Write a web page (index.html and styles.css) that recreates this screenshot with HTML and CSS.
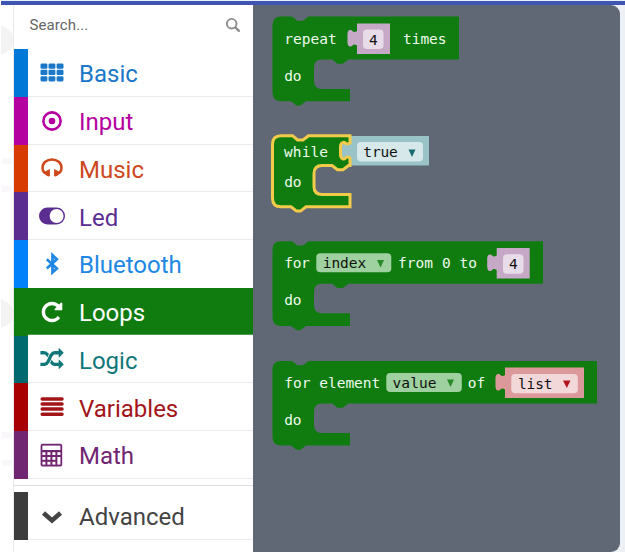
FILE: index.html
```html
<!DOCTYPE html>
<html lang="en">
<head>
<meta charset="utf-8">
<title>Blocks editor</title>
<link rel="stylesheet" href="styles.css">
</head>
<body>
<div class="topbar"></div>
<main class="editor">
  <div class="gutter">
    <svg width="14" height="547" viewBox="0 5 14 547"><path d="M1 25l8 5q4 3 4 7v6q0 5-4 8l-8 4zM1 299l8 5q4 3 4 7v5q0 5-4 8l-8 4z" fill="#f3f3f4"/><path d="M2 161h10M2 189h10M2 435h10M2 463h10" stroke="#f9f7f9" stroke-width="6"/></svg>
  </div>
  <nav class="toolbox">
    <div class="search"><span>Search...</span>
      <svg width="16" height="16" viewBox="0 0 16 16"><circle cx="6.7" cy="6.7" r="4.800" fill="none" stroke="#8d8d8d" stroke-width="1.9"/><path d="M10.4 10.4l3.500 3.500" stroke="#8d8d8d" stroke-width="2.3" stroke-linecap="round"/></svg>
    </div>
    <div class="row basic"><svg class="icon" viewBox="0 0 24 24"><g fill="currentColor"><rect x=".5" y="2.5" width="6.9" height="5.2" rx="1.3"/><rect x="8.5" y="2.5" width="6.9" height="5.2" rx="1.3"/><rect x="16.600" y="2.5" width="6.9" height="5.2" rx="1.3"/><rect x=".5" y="8.800" width="6.9" height="5.2" rx="1.3"/><rect x="8.5" y="8.800" width="6.9" height="5.2" rx="1.3"/><rect x="16.600" y="8.800" width="6.9" height="5.2" rx="1.3"/><rect x=".5" y="15.2" width="6.9" height="5.2" rx="1.3"/><rect x="8.5" y="15.2" width="6.9" height="5.2" rx="1.3"/><rect x="16.600" y="15.2" width="6.9" height="5.2" rx="1.3"/></g></svg><span>Basic</span></div>
    <div class="row input"><svg class="icon" viewBox="0 0 24 24"><circle cx="12" cy="12" r="8.6" fill="none" stroke="currentColor" stroke-width="2.6"/><circle cx="12" cy="12" r="3.3" fill="currentColor"/></svg><span>Input</span></div>
    <div class="row music"><svg class="icon" viewBox="0 0 24 24"><path d="M4.300 16.500Q2.500 14.700 2.500 11.800C2.500 6.700 6.800 3.500 12 3.500s9.500 3.200 9.500 8.300q0 2.900-1.800 4.700" fill="none" stroke="currentColor" stroke-width="2.500"/><path d="M9.900 12.900v7.200q-1.200.7-3.100-.3L2.600 16.700zM14.100 12.900v7.200q1.200.7 3.100-.3l4.200-3.100z" fill="currentColor"/></svg><span>Music</span></div>
    <div class="row led"><svg class="icon wide" viewBox="0 0 28 24"><rect x="1" y="3.500" width="26" height="17" rx="8.500" fill="currentColor"/><circle cx="18.600" cy="12" r="7" fill="#fff"/></svg><span>Led</span></div>
    <div class="row bluetooth"><svg class="icon" viewBox="0 0 24 24"><path d="M6.800 7.200l10 9.200-4.300 4V3.200l4.300 4-10 9.200" fill="none" stroke="currentColor" stroke-width="2.700"/></svg><span>Bluetooth</span></div>
    <div class="row loops"><svg class="icon" viewBox="0 0 1792 1792"><path fill="currentColor" d="M1664 256v448q0 26-19 45t-45 19h-448q-42 0-59-40-17-39 14-69l138-138Q1097 384 896 384q-104 0-198.500 40.500t-163.500 109.500-109.500 163.500-40.500 198.500 40.500 198.500 109.500 163.500 163.500 109.500 198.500 40.500q119 0 225-52t179-147q7-10 23-12 15 0 25 9l137 138q9 8 9.500 20.500t-7.500 22.500q-109 132-264 204.500t-327 72.500q-156 0-298-61t-245-164-164-245-61-298 61-298 164-245 245-164 298-61q147 0 284.500 55.500t244.500 156.500l130-129q29-31 70-14 39 17 39 59z"/></svg><span>Loops</span></div>
    <div class="row logic"><svg class="icon" viewBox="-30 -60 1852 1852"><path fill="currentColor" d="M666 481q-60 92-137 273-22-45-37-72.500t-40.500-63.500-51-56.500-63-35-81.500-14.500h-224q-14 0-23-9t-9-23v-192q0-14 9-23t23-9h224q250 0 410 225zm1126 799q0 14-9 23l-320 320q-9 9-23 9-13 0-22.500-9.500t-9.500-22.500v-192q-32 0-85 .5t-81 1-73-1-71-5-64-10.500-63-18.500-58-28.500-59-40-55-53.500-56-69.500q59-93 136-273 22 45 37 72.500t40.500 63.500 51 56.500 63 35 81.500 14.500h256v-192q0-14 9-23t23-9q12 0 24 10l319 319q9 9 9 23zm0-896q0 14-9 23l-320 320q-9 9-23 9-13 0-22.500-9.500t-9.500-22.500v-192h-256q-48 0-87 15t-69 45-51 61.500-45 77.500q-32 62-78 171-29 66-49.500 111t-54 105-64 100-74 83-90 68.500-106.500 42-128 16.500h-224q-14 0-23-9t-9-23v-192q0-14 9-23t23-9h224q48 0 87-15t69-45 51-61.500 45-77.500q32-62 78-171 29-66 49.500-111t54-105 64-100 74-83 90-68.500 106.500-42 128-16.500h256v-192q0-14 9-23t23-9q12 0 24 10l319 319q9 9 9 23z"/></svg><span>Logic</span></div>
    <div class="row variables"><svg class="icon" viewBox="0 0 24 24"><path d="M2.200 3.900h19.800M2.200 9h19.800M2.200 14.100h19.800M2.200 19.200h19.800" stroke="currentColor" stroke-width="3.500" stroke-linecap="round"/></svg><span>Variables</span></div>
    <div class="row math"><svg class="icon" viewBox="0 0 24 24"><rect x=".6" y=".8" width="21.600" height="22.600" rx="2" fill="currentColor"/><g fill="#fff"><rect x="2.400" y="2.600" width="18" height="4.400"/><rect x="2.400" y="9.200" width="3" height="2.800"/><rect x="7.400" y="9.200" width="3" height="2.800"/><rect x="12.400" y="9.200" width="3" height="2.800"/><rect x="17.400" y="9.200" width="3" height="2.800"/><rect x="2.400" y="14" width="3" height="2.800"/><rect x="7.400" y="14" width="3" height="2.800"/><rect x="12.400" y="14" width="3" height="2.800"/><rect x="17.400" y="14" width="3" height="7.600"/><rect x="2.400" y="18.800" width="3" height="2.800"/><rect x="7.400" y="18.800" width="3" height="2.800"/><rect x="12.400" y="18.800" width="3" height="2.800"/></g></svg><span>Math</span></div>
    <div class="divider"></div>
    <div class="row advanced"><svg class="icon" viewBox="0 0 24 24"><path d="M3.500 9l8.500 7.400L20.500 9" fill="none" stroke="currentColor" stroke-width="4.600"/></svg><span>Advanced</span></div>
  </nav>
  <section class="flyout">
    <svg class="slice" width="367" height="120" viewBox="253 5 367 120">
      <path class="loop" d="M281 16.500H292l5.500 4.300h5.500l5.500-4.300H459V59.500H348.500l-5.500 4.300h-5.500l-5.500-4.300H322q-8 0-8 8V81q0 8 8 8H350V101.300H306l-5.500 4.300h-4l-5.500-4.300H281q-8.500 0-8.500-8.500V25q0-8.500 8.500-8.500z"/>
      <path class="num" d="M357 23.500H390V54H357V45.500C352.500 42.500 353 47 350 46.500 347 46 347.500 42 347.500 38S347 30.500 350 30c3-.5 2.500 4 7 1z"/>
      <rect class="numfield" x="363" y="29.500" width="20.500" height="19.500" rx="4"/>
      <text x="284.300" y="43.700" textLength="52.500">repeat</text><text class="dark" x="369" y="45">4</text><text x="403" y="43.700" textLength="43.500">times</text><text x="284.300" y="81" textLength="17.300">do</text>
    </svg>
    <svg class="slice" width="367" height="105" viewBox="253 125 367 105">
      <path class="bool" d="M350 136H429V165.500H350V158C345 155 346 160 343 159c-3-1-2.500-4-2.500-8S340 143.500 343 142.500c3-1 2 4 7 1z"/>
      <path class="loop selected" d="M281 135.700H292.500l5 4.300h5.500l5.500-4.300H350V143C345 146 346 141.500 343 142.500c-3 1-2.500 4-2.500 8s-.5 7.500 2.500 8.500c3 1 2-4 7-1V165.500H348.500l-5.500 4.300h-5.500l-5.500-4.300H322q-8 0-8 8V186.500q0 8 8 8H350V206.800H306l-5.500 4.300h-4l-5.500-4.300H281q-8.500 0-8.500-8.500V144.200q0-8.500 8.500-8.500z"/>
      <rect class="boolfield" x="357" y="142" width="66" height="19.500" rx="4"/>
      <text x="284" y="157.300" textLength="44">while</text><text class="dark" x="363.300" y="157.300" textLength="34.500">true</text><path d="M408.500 149.500h7l-3.500 7.500z" fill="#176b70"/><text x="284.300" y="187.300" textLength="17.300">do</text>
    </svg>
    <svg class="slice" width="367" height="120" viewBox="253 230 367 120">
      <path class="loop" d="M281 241.200H292l5.500 4.300h5.500l5.500-4.300H543V283.700H348.500l-5.500 4.300h-5.500l-5.500-4.300H322q-8 0-8 8V305.300q0 8 8 8H350V326H306l-5.500 4.300h-4l-5.500-4.300H281q-8.500 0-8.500-8.500V249.700q0-8.500 8.500-8.500z"/>
      <rect class="loopfield" x="316.300" y="253.300" width="75" height="19" rx="4"/>
      <path class="num" transform="translate(139.700 224.500)" d="M357 23.500H390V54H357V45.500C352.500 42.500 353 47 350 46.500 347 46 347.500 42 347.500 38S347 30.500 350 30c3-.5 2.500 4 7 1z"/>
      <rect class="numfield" x="503" y="254.300" width="20.500" height="19.500" rx="4"/>
      <text x="284.300" y="268.300" textLength="25.500">for</text><text class="dark" x="322.700" y="268.300" textLength="43.500">index</text><path d="M377 260h7l-3.500 7.500z" fill="#278a27"/><text x="398" y="268.300" textLength="79">from 0 to</text><text class="dark" x="509" y="269.400">4</text><text x="284.300" y="305.400" textLength="17.300">do</text>
    </svg>
    <svg class="slice" width="367" height="202" viewBox="253 350 367 202">
      <path class="loop" d="M281 361H292l5.500 4.300h5.500l5.500-4.300H597V403.500H348.500l-5.500 4.300h-5.500l-5.500-4.300H322q-8 0-8 8V425q0 8 8 8H350V445.500H306l-5.500 4.300h-4l-5.500-4.300H281q-8.500 0-8.500-8.500V369.500q0-8.500 8.500-8.500z"/>
      <rect class="loopfield" x="386.300" y="373" width="75.500" height="19" rx="4"/>
      <path class="var" d="M505 367.500H584V398H505V389.500C500.500 386.500 501 391 498 390.500 495 390 495.500 386 495.500 382S495 374.500 498 374c3-.5 2.500 4 7 1z"/>
      <rect class="varfield" x="511.300" y="374" width="66.500" height="19.300" rx="4"/>
      <text x="284.300" y="388" textLength="96">for element</text><text class="dark" x="392.500" y="388" textLength="44">value</text><path d="M447 379.500h7l-3.500 7.500z" fill="#278a27"/><text x="467.800" y="388" textLength="17.500">of</text><text class="dark" x="518" y="388.800" textLength="34.500">list</text><path d="M563 380.500h7.500l-3.700 7.500z" fill="#b31419"/><text x="284.300" y="425" textLength="17.300">do</text>
    </svg>
  </section>
</main>
</body>
</html>
```
FILE: styles.css
```css
* { box-sizing: border-box; }
body { margin: 0; width: 625px; height: 552px; overflow: hidden; background: #fff; font-family: Roboto, "Liberation Sans", sans-serif; }
.topbar { height: 5px; margin-left: 1px; border-top: 1px solid #e6f0fa; background: #4054b2; }
.editor { display: flex; height: 547px; background: linear-gradient(90deg, #fff 50%, #edf1f6 50%); }
.gutter { width: 14px; border-right: 1px solid #e9e9ea; background: #fff; }
.gutter svg { display: block; }
.toolbox { width: 239px; background: #fff; }
.search { display: flex; align-items: center; justify-content: space-between; height: 44px; padding: 0 12.500px 5px 15.500px; font-size: 15px; letter-spacing: .1px; color: #666; }
.row { display: flex; align-items: center; height: 47.75px; border-left: 14.500px solid var(--c); color: var(--c); font-size: 24px; background: linear-gradient(#ebebed, #ebebed) bottom / 100% 1px no-repeat; }
.icon { width: 24px; height: 24px; margin: 0 15.500px 0 11.500px; flex: none; }
.icon.wide { width: 28px; margin: 0 13.500px 0 9.500px; }
.row span { position: relative; top: 1.500px; }
.basic { --c: #0078d7; color: #1b78c8; }
.input { --c: #b4009e; }
.music { --c: #d83b01; color: #cd481d; }
.led { --c: #5c2d91; }
.bluetooth { --c: #0082fb; color: #2187e4; background: none; }
.loops { --c: #107c10; background: linear-gradient(#107c10, #107c10) top / 100% 46.750px no-repeat; color: #fff; }
.logic { --c: #006970; color: #10777a; }
.variables { --c: #a80000; color: #a31419; }
.math { --c: #712672; }
.divider { height: 13px; background: linear-gradient(#dedee0, #dedee0) 0 6px / 100% 1px no-repeat; }
.advanced { --c: #3c3c3c; color: #444; }
.flyout { width: 367px; height: 546.500px; overflow: hidden; border-radius: 0 9px 9px 0; background: #616875; }
.slice { display: block; }
.slice text { font-family: "DejaVu Sans Mono", "Liberation Mono", monospace; font-size: 14.500px; fill: #eefaec; }
.slice text.dark { fill: #111; }
.loop { fill: #107c10; }
.selected { stroke: #f2cb4a; stroke-width: 3; }
.num { fill: #c6a8c7; }
.numfield { fill: #e8dce9; }
.bool { fill: #99c3c6; }
.boolfield { fill: #d6e8e9; }
.loopfield { fill: #9fd09f; }
.var { fill: #dc999c; }
.varfield { fill: #f3d8da; }
```
